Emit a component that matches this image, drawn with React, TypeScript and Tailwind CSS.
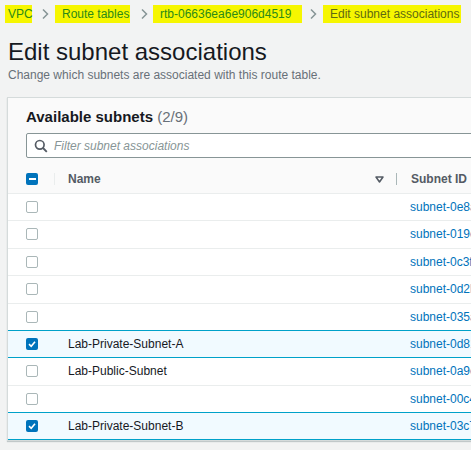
import React from "react";

const rows: { name: string; id: string; checked: boolean }[] = [
  { name: "", id: "subnet-0e8a3f1c2b7d94e61", checked: false },
  { name: "", id: "subnet-019c2e4a7f3b5d802", checked: false },
  { name: "", id: "subnet-0c3f7a9e1d2b4c653", checked: false },
  { name: "", id: "subnet-0d2b6e8f4a1c3d974", checked: false },
  { name: "", id: "subnet-035a9c1e7b2f4d815", checked: false },
  { name: "Lab-Private-Subnet-A", id: "subnet-0d81f2a3c4b5e6d79", checked: true },
  { name: "Lab-Public-Subnet", id: "subnet-0a9e3b7c1d5f2a648", checked: false },
  { name: "", id: "subnet-00c4d8e2f1a6b3c57", checked: false },
  { name: "Lab-Private-Subnet-B", id: "subnet-03c7b1e9d2a4f6c80", checked: true },
];

function Chevron() {
  return (
    <svg width="8" height="12" viewBox="0 0 8 12" className="shrink-0">
      <path d="M2 1.5 L6.5 6 L2 10.5" fill="none" stroke="#879596" strokeWidth="1.5" />
    </svg>
  );
}

function CheckBox({ state }: { state: "on" | "off" | "mixed" }) {
  if (state === "off") {
    return <div className="w-[12px] h-[12px] rounded-[2px] border border-[#aab7b8] bg-white" />;
  }
  return (
    <div className="w-[12px] h-[12px] rounded-[2px] bg-[#0073bb] flex items-center justify-center">
      {state === "on" ? (
        <svg width="10" height="10" viewBox="0 0 10 10">
          <path d="M2 5.2 L4.2 7.3 L8 2.8" fill="none" stroke="white" strokeWidth="1.6" />
        </svg>
      ) : (
        <div className="w-[7px] h-[2px] bg-white" />
      )}
    </div>
  );
}

export default function App() {
  const font = { fontFamily: '"Liberation Sans", Arial, sans-serif' };
  return (
    <div className="w-[471px] h-[450px] overflow-hidden bg-[#f2f3f3]" style={font}>
      {/* breadcrumbs */}
      <div className="h-[27px] flex items-center text-[12px] whitespace-nowrap">
        <span className="ml-[5px] w-[27px] h-[18px] leading-[18px] pl-[3px] bg-[#f6f600] text-[#2a8a1a]">VPC</span>
        <span className="ml-[9px] mr-[6px] flex"><Chevron /></span>
        <span className="w-[75px] h-[18px] leading-[18px] pl-[7px] bg-[#f6f600] text-[#2a8a1a]">Route tables</span>
        <span className="ml-[10px] mr-[5px] flex"><Chevron /></span>
        <span className="w-[149px] h-[18px] leading-[18px] pl-[7px] bg-[#f6f600] text-[#2a8a1a]">rtb-06636ea6e906d4519</span>
        <span className="ml-[7px] mr-[6px] flex"><Chevron /></span>
        <span className="w-[138px] h-[18px] leading-[18px] pl-[7px] bg-[#f6f600] text-[#5f6a12]">Edit subnet associations</span>
      </div>
      {/* title */}
      <div className="pl-[8px] mt-[10px] h-[30px] leading-[30px] text-[24px] text-[#16191f]">
        Edit subnet associations
      </div>
      <div className="pl-[8px] h-[16px] leading-[16px] text-[12px] text-[#687078]">
        Change which subnets are associated with this route table.
      </div>
      {/* card */}
      <div className="ml-[7px] mt-[14px] w-[640px] bg-white border border-[#d5dbdb] shadow-[0_1px_1px_rgba(0,28,36,0.2)]">
        <div className="bg-[#fafafa] pt-[9px] pl-[18px]">
          <div className="h-[20px] leading-[20px] text-[15px] whitespace-nowrap">
            <span className="font-bold text-[#16191f]">Available subnets</span>{" "}
            <span className="text-[#687078]">(2/9)</span>
          </div>
          <div className="mt-[6px] h-[25px] border border-[#879596] rounded-[2px] bg-white flex items-center pl-[7px]">
            <svg width="14" height="14" viewBox="0 0 14 14">
              <circle cx="5.8" cy="5.8" r="4.3" fill="none" stroke="#545b64" strokeWidth="1.7" />
              <path d="M9 9 L12.8 12.8" stroke="#545b64" strokeWidth="1.8" />
            </svg>
            <span className="ml-[6px] italic text-[12px] text-[#879596]">Filter subnet associations</span>
          </div>
        </div>
        {/* header row */}
        <div className="pt-[8px] bg-[#fafafa]">
          <div className="h-[27.5px] flex items-center border-b border-[#eaeded] text-[12px] font-bold text-[#545b64]">
            <div className="w-[18px]" />
            <CheckBox state="mixed" />
            <div className="ml-[16px] w-[1px] h-[12px] bg-[#eaeded]" />
            <div className="ml-[13px] w-[307px]">Name</div>
            <svg width="9" height="7" viewBox="0 0 9 7">
              <path d="M1 1 L8 1 L4.5 6 Z" fill="none" stroke="#545b64" strokeWidth="1.5" strokeLinejoin="round" />
            </svg>
            <div className="ml-[12px] w-[1px] h-[12px] bg-[#aab7b8]" />
            <div className="ml-[14px]">Subnet ID</div>
          </div>
        </div>
        {rows.map((r, i) => (
          <div
            key={i}
            className={
              r.checked
                ? "h-[28px] flex items-center bg-[#f1faff] border-y border-[#00a1c9] text-[12px] relative z-10 -mt-px"
                : "h-[27.5px] flex items-center bg-white border-b border-[#eaeded] text-[12px]"
            }
          >
            <div className="w-[18px]" />
            <CheckBox state={r.checked ? "on" : "off"} />
            <div className="ml-[30px] w-[342px] text-[#16191f]">{r.name}</div>
            <div className="text-[#0073bb] whitespace-nowrap">{r.id}</div>
          </div>
        ))}
      </div>
    </div>
  );
}
